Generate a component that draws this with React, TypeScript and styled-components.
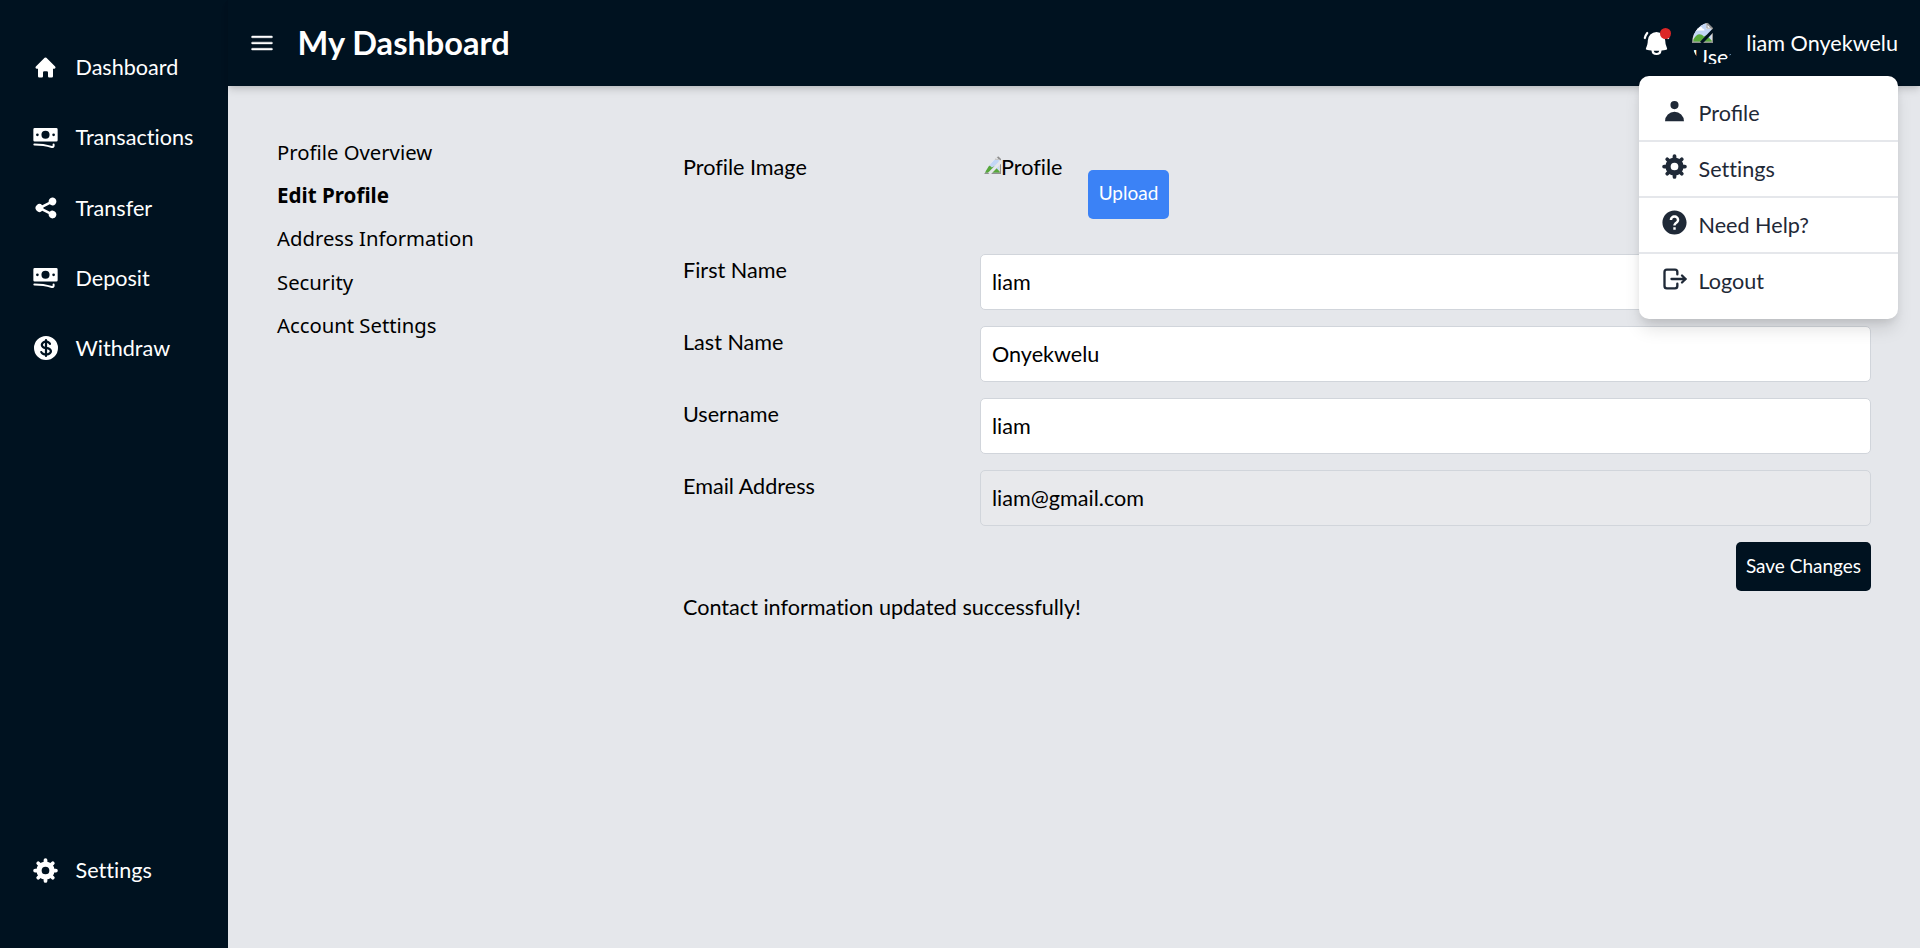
import React from 'react';
import styled, { createGlobalStyle } from 'styled-components';
import { HiShare, HiUser } from 'react-icons/hi';
import {
  HiBars3,
  HiMiniBanknotes,
  HiMiniBellAlert,
  HiMiniCurrencyDollar,
  HiMiniHome,
} from 'react-icons/hi2';
import { BiSolidHelpCircle } from 'react-icons/bi';
import { TbLogout } from 'react-icons/tb';

const navy = '#001220';

const GlobalStyle = createGlobalStyle`
  *, *::before, *::after { box-sizing: border-box; }
  body {
    margin: 0;
    background: #e5e7eb;
    color: #000;
    font-family: Lato, 'Liberation Sans', sans-serif;
    font-size: 21.6px;
    line-height: 28px;
    font-variant-ligatures: none;
  }
  h1, ul { margin: 0; padding: 0; list-style: none; }
  input, button { font: inherit; font-variant-ligatures: none; }
`;

const Shell = styled.div`
  display: flex;
  height: 948px;
`;

const Sidebar = styled.nav`
  width: 228px;
  flex: none;
  display: flex;
  flex-direction: column;
  justify-content: space-between;
  padding: 53px 0 64px;
  background: ${navy};
  color: #fff;
`;

const NavList = styled.ul`
  display: flex;
  flex-direction: column;
  gap: 42.3px;
`;

const NavItem = styled.li`
  display: flex;
  align-items: center;
  gap: 14.5px;
  height: 28px;
  padding-left: 30px;
`;

const IconSlot = styled.span`
  width: 31px;
  height: 30px;
  flex: none;
  display: flex;
  align-items: center;
  justify-content: center;
`;

const Body = styled.div`
  flex: 1;
  display: flex;
  flex-direction: column;
`;

const Header = styled.header`
  position: relative;
  height: 86px;
  flex: none;
  display: flex;
  align-items: center;
  padding: 0 22px 0 20px;
  background: ${navy};
  color: #fff;
  box-shadow: 0 5px 8px -1px rgba(0, 0, 0, 0.12), 0 2px 5px -1px rgba(0, 0, 0, 0.1);
`;

const MenuToggle = styled(HiBars3)`
  stroke: currentColor;
  stroke-width: 0.4;
`;

const Title = styled.h1`
  flex: 1;
  margin-left: 21.5px;
  font-size: 32.6px;
  line-height: 40px;
  font-weight: 700;
`;

const Bell = styled.div`
  position: relative;
  display: flex;
  margin-right: 21px;
`;

const Dot = styled.span`
  position: absolute;
  top: -1px;
  right: 0;
  width: 11px;
  height: 11px;
  border-radius: 50%;
  background: #dc2626;
`;

const Avatar = styled.div`
  width: 42px;
  height: 42px;
  margin-right: 12px;
  border-radius: 50%;
  overflow: hidden;
  line-height: 29px;
  svg { display: block; }
`;

const AvatarAlt = styled.span`
  display: block;
`;

const Menu = styled.ul`
  position: absolute;
  top: 76px;
  right: 22px;
  z-index: 2;
  width: 259px;
  height: 243px;
  padding-top: 10px;
  border-radius: 10px;
  background: #fff;
  color: #1f2937;
  box-shadow: 0 12px 18px -3px rgba(0, 0, 0, 0.13), 0 4px 8px -2px rgba(0, 0, 0, 0.09);
`;

const MenuItem = styled.li`
  display: flex;
  align-items: center;
  gap: 8.5px;
  height: 56px;
  padding: 0 0 0 20px;
  border-bottom: 2px solid #e5e7eb;
  &:first-child { font-variant-ligatures: normal; }
  &:last-child { border-bottom: 0; padding-bottom: 2px; }
  ${IconSlot} { margin-top: -5px; }
`;

const Content = styled.main`
  flex: 1;
  display: flex;
  align-items: flex-start;
  padding: 52px 49px 0;
`;

const Tabs = styled.ul`
  width: 406px;
  flex: none;
  display: flex;
  flex-direction: column;
  gap: 15.2px;
`;

const Tab = styled.li<{ $active?: boolean }>`
  height: 28px;
  line-height: 28px;
  white-space: nowrap;
  font-family: 'Noto Sans', 'Open Sans', sans-serif;
  font-size: ${p => (p.$active ? '20.6px' : '20.3px')};
  font-weight: ${p => (p.$active ? 700 : 400)};
`;

const Form = styled.form`
  flex: 1;
  display: flex;
  flex-direction: column;
  padding-top: 9px;
`;

const Row = styled.div<{ $tall?: boolean }>`
  display: grid;
  grid-template-columns: 297px 1fr;
  align-items: start;
  height: ${p => (p.$tall ? '107px' : '72px')};
`;

const Label = styled.label<{ $top?: number }>`
  padding-top: ${p => p.$top ?? 2}px;
`;

const Field = styled.input`
  width: 100%;
  height: 56px;
  padding: 0 11px;
  border: 1px solid #d1d5db;
  border-radius: 5px;
  background: #fff;
  color: #000;
  outline: none;
  &:disabled { background: #e8e9ec; }
`;

const ImageRow = styled.div`
  display: flex;
  align-items: center;
  gap: 12px;
  margin-top: -1px;
`;

const Photo = styled.div`
  width: 96px;
  height: 96px;
  padding-top: 7px;
  display: flex;
  border-radius: 50%;
  overflow: hidden;
  svg { flex: none; }
`;

const Button = styled.button<{ $tone: 'blue' | 'navy' }>`
  width: ${p => (p.$tone === 'blue' ? 81 : 135)}px;
  height: 49px;
  padding: 0 0 2px;
  border: 0;
  border-radius: 5px;
  align-self: ${p => (p.$tone === 'blue' ? 'center' : 'flex-end')};
  background: ${p => (p.$tone === 'blue' ? '#3b82f6' : navy)};
  color: #fff;
  font-size: 19px;
  white-space: nowrap;
`;

const Status = styled.p`
  margin: 2px 0 0;
`;

const GearIcon = () => (
  <svg width="25" height="25" viewBox="0 0 24 24" fill="none" stroke="currentColor">
    <circle cx="12" cy="12" r="6.2" strokeWidth="5" />
    <path
      strokeWidth="3.6"
      strokeLinecap="round"
      d="M12 4V2M12 20v2M4 12H2M20 12h2M6.4 6.4 5 5M17.6 6.4 19 5M6.4 17.6 5 19M17.6 17.6 19 19"
    />
  </svg>
);

const BrokenImage = ({ gap }: { gap: string }) => (
  <svg width="21" height="21" viewBox="0 0 16 16">
    <path fill="#fff" stroke="#8f8f8f" d="M.5.5h10.7l4.3 4.3v10.7H.5z" />
    <path fill="#c2d6f5" d="M1.6 1.6h9.2v3.8h3.6V15H1.6z" />
    <path fill="#fff" d="M3 6.5c0-1 .9-1.8 2-1.6.5-1.4 2.7-1.4 3 0 1 0 1.5.7 1.5 1.600z" />
    <path fill="#58a83a" d="M1 13.500c2-4.500 5.500-5.500 8-2.500l2-1 4 4v1H1z" />
    <path fill="#8f8f8f" d="M0 15h16v1H0zM11 0l5 5h-5z" />
    <path fill="#fff" d="M11.800 2.200 14 4.300h-2.200z" />
    <path fill="none" stroke={gap} strokeWidth="2.4" d="M16.500 6 7 15.800" />
  </svg>
);

const navItems: [string, React.ReactNode][] = [
  ['Dashboard', <HiMiniHome size={25} />],
  ['Transactions', <HiMiniBanknotes size={27} />],
  ['Transfer', <HiShare size={26} />],
  ['Deposit', <HiMiniBanknotes size={27} />],
  ['Withdraw', <HiMiniCurrencyDollar size={30} />],
];

const menuItems: [string, React.ReactNode][] = [
  ['Profile', <HiUser size={27} />],
  ['Settings', <GearIcon />],
  ['Need Help?', <BiSolidHelpCircle size={29} />],
  ['Logout', <TbLogout size={28} />],
];

const tabs = ['Profile Overview', 'Edit Profile', 'Address Information', 'Security', 'Account Settings'];

const fields = [
  { label: 'First Name', value: 'liam' },
  { label: 'Last Name', value: 'Onyekwelu' },
  { label: 'Username', value: 'liam' },
  { label: 'Email Address', value: 'liam@gmail.com', disabled: true },
];

export default function App() {
  return (
    <>
      <GlobalStyle />
      <Shell>
        <Sidebar>
          <NavList>
            {navItems.map(([name, icon]) => (
              <NavItem key={name}><IconSlot>{icon}</IconSlot>{name}</NavItem>
            ))}
          </NavList>
          <NavItem><IconSlot><GearIcon /></IconSlot>Settings</NavItem>
        </Sidebar>
        <Body>
          <Header>
            <MenuToggle size={28} />
            <Title>My Dashboard</Title>
            <Bell><HiMiniBellAlert size={29} /><Dot /></Bell>
            <Avatar>
              <BrokenImage gap={navy} />
              <AvatarAlt>User</AvatarAlt>
            </Avatar>
            <span>liam Onyekwelu</span>
            <Menu>
              {menuItems.map(([name, icon]) => (
                <MenuItem key={name}><IconSlot>{icon}</IconSlot>{name}</MenuItem>
              ))}
            </Menu>
          </Header>
          <Content>
            <Tabs>
              {tabs.map(t => <Tab key={t} $active={t === 'Edit Profile'}>{t}</Tab>)}
            </Tabs>
            <Form>
              <Row $tall>
                <Label $top={6}>Profile Image</Label>
                <ImageRow>
                  <Photo><BrokenImage gap="#e5e7eb" />Profile</Photo>
                  <Button $tone="blue" type="button">Upload</Button>
                </ImageRow>
              </Row>
              {fields.map(f => (
                <Row key={f.label}>
                  <Label>{f.label}</Label>
                  <Field defaultValue={f.value} disabled={f.disabled} />
                </Row>
              ))}
              <Button $tone="navy" type="button">Save Changes</Button>
              <Status>Contact information updated successfully!</Status>
            </Form>
          </Content>
        </Body>
      </Shell>
    </>
  );
}
